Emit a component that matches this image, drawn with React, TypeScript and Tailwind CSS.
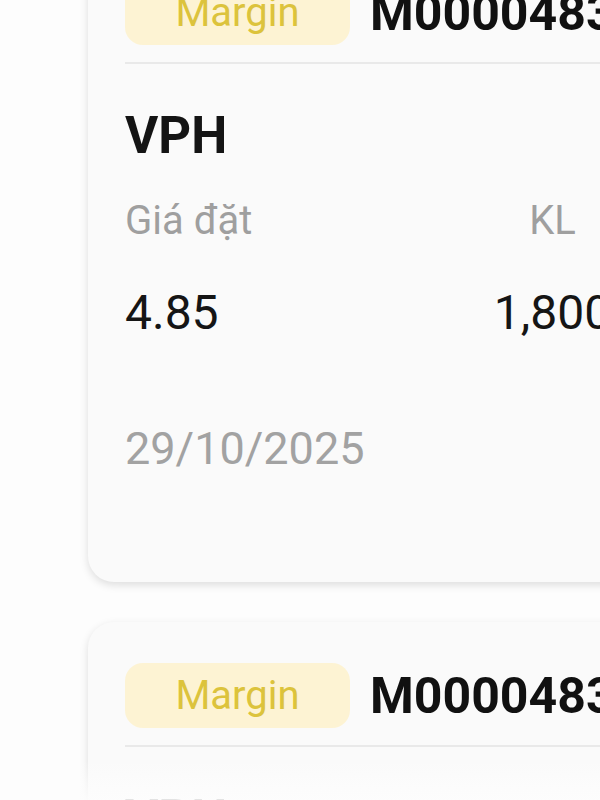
import React from "react";

type Order = {
  id: string;
  type: string;
  symbol: string;
  price: string;
  volume: string;
  date: string;
};

const orders: Order[] = [
  { id: "M00004831", type: "Margin", symbol: "VPH", price: "4.85", volume: "1,800", date: "29/10/2025" },
  { id: "M00004832", type: "Margin", symbol: "VPH", price: "4.85", volume: "1,800", date: "29/10/2025" },
];

const OrderCard: React.FC<{ order: Order; className?: string }> = ({ order, className }) => (
  <div
    className={`w-[1000px] shrink-0 rounded-[26px] bg-[#fafafa] pl-[37px] pt-[41px] pb-[111px] shadow-[0_3px_8px_rgba(0,0,0,0.13)] ${className ?? ""}`}
  >
    <div className="flex items-center">
      <div className="flex h-[65px] w-[225px] items-center justify-center rounded-[18px] bg-[#fdf3d3] text-[40px] leading-none text-[#dcc33c]">
        {order.type}
      </div>
      <div className="ml-[20px] text-[50px] font-bold leading-none text-[#111]">{order.id}</div>
    </div>
    <div className="mt-[17px] h-[2px] bg-[#e9e9e9]" />

    <div className="mt-[46px] text-[51px] font-bold leading-none text-[#141414]">{order.symbol}</div>

    <div className="mt-[40px] flex text-[40px] leading-none text-[#9f9f9f]">
      <div className="w-[330px]">Giá đặt</div>
      <div className="w-[195px] text-center">KL</div>
    </div>

    <div className="mt-[48px] flex text-[48px] leading-none text-[#151515]">
      <div className="w-[330px]">{order.price}</div>
      <div className="w-[195px] text-center whitespace-nowrap">{order.volume}</div>
    </div>

    <div className="mt-[89px] text-[45px] leading-none text-[#a2a2a2]">{order.date}</div>
  </div>
);

export default function App() {
  return (
    <div
      className="relative h-[800px] w-[600px] overflow-hidden bg-[#fdfdfd]"
      style={{ fontFamily: "Roboto, 'Noto Sans', sans-serif" }}
    >
      <div className="flex flex-col gap-[40px] pl-[88px]">
        <OrderCard order={orders[0]} className="-mt-[61px]" />
        <OrderCard order={orders[1]} />
      </div>
      {/* soft fade where the list runs off the bottom */}
      <div className="pointer-events-none absolute inset-x-0 bottom-0 h-[40px] bg-gradient-to-b from-transparent to-[#fdfdfd]/90" />
    </div>
  );
}
